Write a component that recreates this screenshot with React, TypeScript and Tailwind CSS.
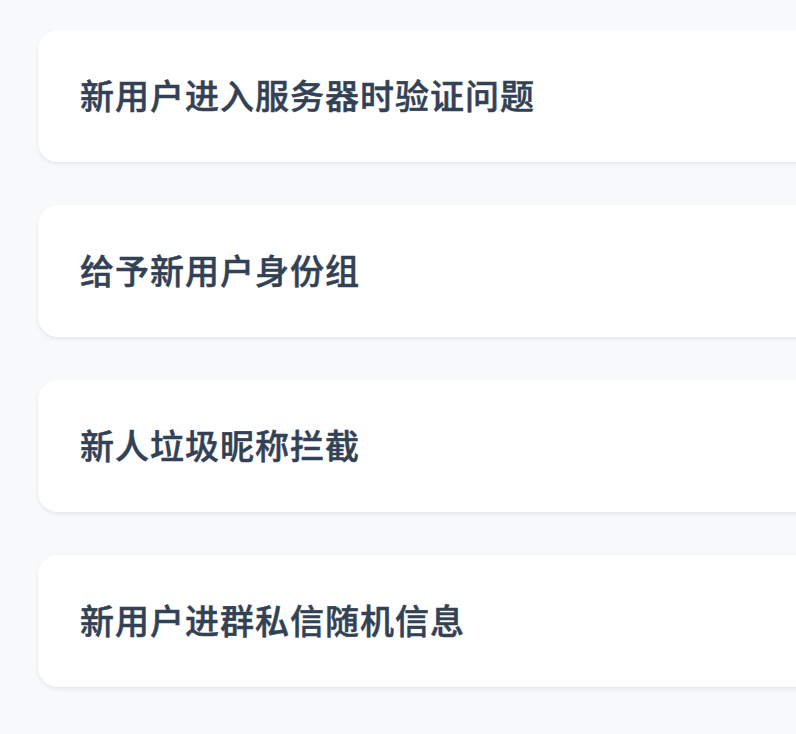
const items = [
  "新用户进入服务器时验证问题",
  "给予新用户身份组",
  "新人垃圾昵称拦截",
  "新用户进群私信随机信息",
]

export default function App() {
  return (
    <div className="h-[734px] w-[796px] overflow-hidden bg-[#f8f9fb] pt-[30px] pl-[38px] font-['Noto_Sans_CJK_SC',sans-serif]">
      <div className="flex w-[900px] flex-col gap-[43px]">
        {items.map((t) => (
          <div
            key={t}
            className="flex h-[132px] items-center rounded-[20px] bg-white pb-[3px] pl-[42px] shadow-[0_2px_4px_rgba(0,0,0,0.08)]"
          >
            <span className="text-[34px] font-medium tracking-[1px] text-[#334155] [-webkit-text-stroke:0.5px_#334155]">{t}</span>
          </div>
        ))}
      </div>
    </div>
  )
}
